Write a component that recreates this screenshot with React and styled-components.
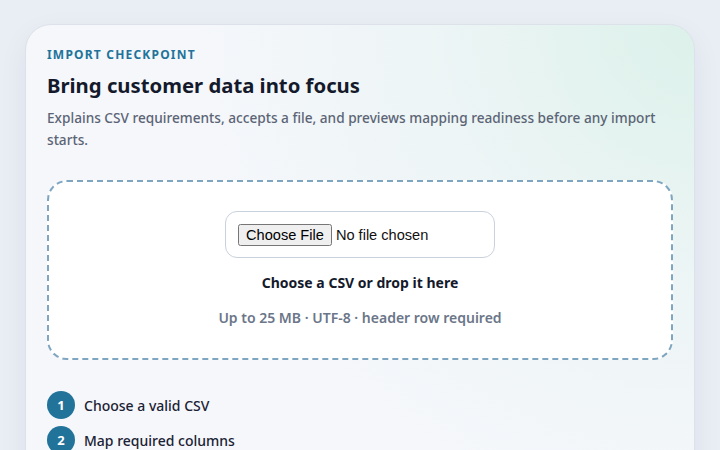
import React from "react";
import styled, { createGlobalStyle } from "styled-components";

const Global = createGlobalStyle`
  html, body { margin: 0; padding: 0; }
  body {
    background: #e9edf4;
    font-family: "Noto Sans", "Open Sans", sans-serif;
    color: #111827;
  }
  * { box-sizing: border-box; }
`;

const Page = styled.div`
  padding: 24px 25px;
  min-height: 450px;
`;

const Card = styled.section`
  border: 1px solid #dde2ea;
  border-radius: 26px;
  padding: 22px 21px 24px;
  background:
    radial-gradient(circle at 100% 0%, rgba(214, 240, 230, 0.8) 0%, rgba(226, 242, 238, 0.45) 30%, rgba(245, 247, 251, 0) 60%),
    #f5f7fb;
  box-shadow: 0 10px 30px rgba(30, 41, 59, 0.06);
  display: flex;
  flex-direction: column;
`;

const Eyebrow = styled.div`
  font-size: 12px;
  line-height: 16px;
  font-weight: 700;
  letter-spacing: 0.1em;
  text-transform: uppercase;
  color: #21739a;
`;

const Title = styled.h1`
  margin: 8px 0 0;
  font-size: 20.3px;
  line-height: 28px;
  font-weight: 700;
  color: #141a2b;
`;

const Desc = styled.p`
  margin: 8px 0 0;
  font-size: 13.65px;
  line-height: 22px;
  color: #5b6475;
  font-weight: 500;
`;

const Drop = styled.div`
  margin-top: 29px;
  height: 180px;
  border: 2px dashed #7fa6c0;
  border-radius: 20px;
  background: #ffffff;
  display: flex;
  flex-direction: column;
  align-items: center;
  padding-top: 29px;
`;

const FileBox = styled.label`
  width: 270px;
  height: 47px;
  border: 1px solid #c9d1dd;
  border-radius: 12px;
  display: flex;
  align-items: center;
  padding: 0 12px;
  input {
    font-family: "Liberation Sans", Arial, sans-serif;
    font-size: 14.6px;
    color: #111;
  }
`;

const DropTitle = styled.div`
  margin-top: 15px;
  font-size: 14px;
  line-height: 19px;
  font-weight: 700;
  color: #141a2b;
`;

const DropHint = styled.div`
  margin-top: 16px;
  font-size: 14px;
  line-height: 19px;
  font-weight: 600;
  color: #6b7689;
`;

const Steps = styled.ol`
  list-style: none;
  margin: 31px 0 0;
  padding: 0;
  display: flex;
  flex-direction: column;
  gap: 7px;
`;

const Step = styled.li`
  display: flex;
  align-items: center;
  gap: 9px;
  font-size: 14px;
  font-weight: 500;
  color: #1b2233;
`;

const Num = styled.span`
  width: 28px;
  height: 28px;
  border-radius: 50%;
  background: #21739a;
  color: #fff;
  font-size: 13px;
  font-weight: 700;
  display: flex;
  align-items: center;
  justify-content: center;
`;

export default function App() {
  return (
    <Page>
      <Global />
      <Card>
        <Eyebrow>Import checkpoint</Eyebrow>
        <Title>Bring customer data into focus</Title>
        <Desc>
          Explains CSV requirements, accepts a file, and previews mapping readiness before any import starts.
        </Desc>
        <Drop>
          <FileBox>
            <input type="file" accept=".csv" />
          </FileBox>
          <DropTitle>Choose a CSV or drop it here</DropTitle>
          <DropHint>Up to 25 MB · UTF-8 · header row required</DropHint>
        </Drop>
        <Steps>
          <Step><Num>1</Num>Choose a valid CSV</Step>
          <Step><Num>2</Num>Map required columns</Step>
          <Step><Num>3</Num>Review before import</Step>
        </Steps>
      </Card>
    </Page>
  );
}
